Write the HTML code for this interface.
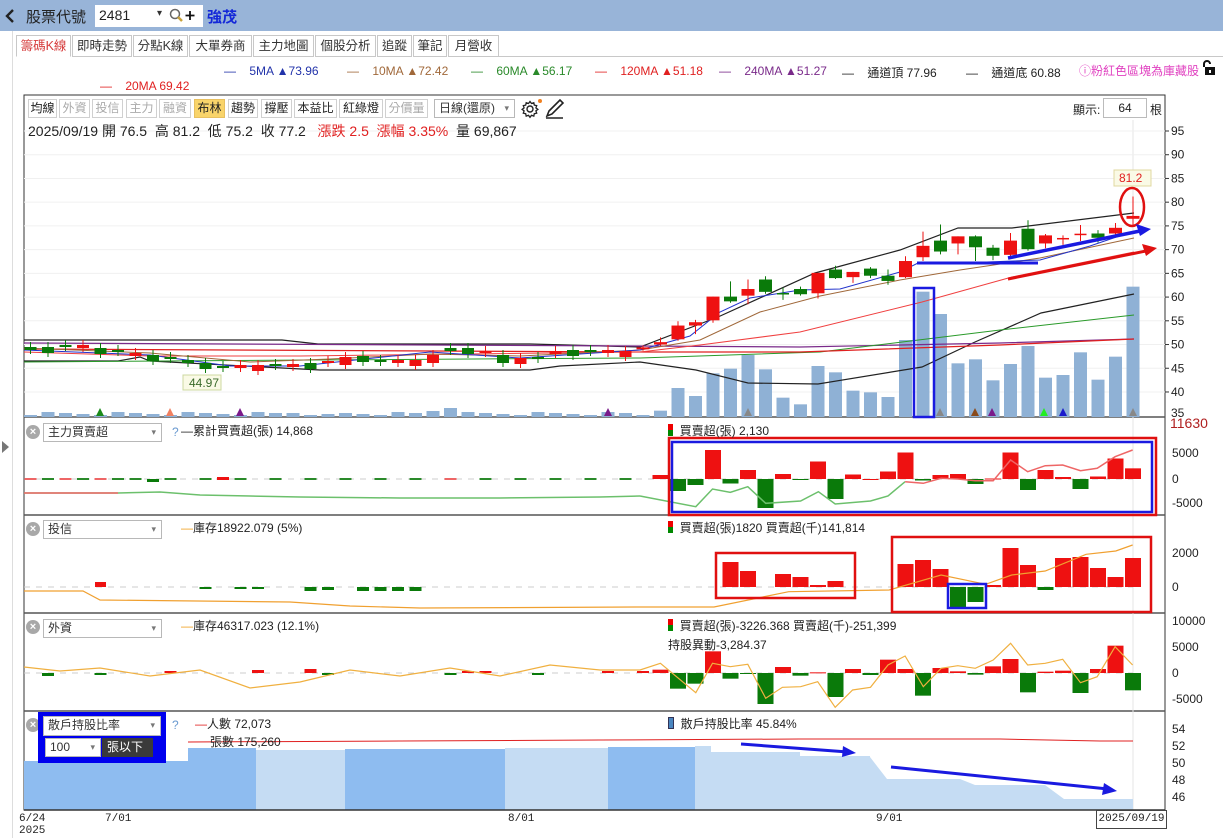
<!DOCTYPE html>
<html><head><meta charset="utf-8">
<style>
*{margin:0;padding:0;box-sizing:border-box}
body{width:1223px;height:838px;overflow:hidden;background:#fff;font-family:"Liberation Sans","Noto Sans CJK TC",sans-serif;font-size:12px;color:#222;position:relative}
.a{position:absolute;white-space:nowrap}
.top{left:0;top:0;width:1223px;height:31px;background:#98b4d8}
.tab{position:absolute;top:35px;height:22px;border:1px solid #c8c8c8;background:#fff;font-size:12.5px;line-height:20px;text-align:center;color:#333}
.btn{position:absolute;top:99px;height:19px;border:1px solid #d0d0d0;background:#fff;font-size:12px;line-height:17px;text-align:center;color:#222}
.dis{color:#aaa}
.sel{position:absolute;height:19px;border:1px solid #b8b8b8;background:#fff;font-size:12px;line-height:17px;padding-left:4px;color:#333}
.sel:after{content:"▾";position:absolute;right:5px;top:0;font-size:9px;color:#777}
.cls{position:absolute;width:14px;height:14px;border-radius:50%;background:#a8a8a8;color:#fff;font-size:11px;line-height:14px;text-align:center;font-weight:bold}
.q{position:absolute;color:#6a9ad0;font-size:12px}
.lg{position:absolute;font-size:12px;white-space:nowrap}
</style></head><body>
<div class="a top"></div>
<svg class="a" style="left:4px;top:8px" width="12" height="16"><path d="M9 2L3 8l6 6" fill="none" stroke="#222" stroke-width="2.4"/></svg>
<div class="a" style="left:26px;top:6px;font-size:15px;color:#222">股票代號</div>
<div class="a" style="left:95px;top:5px;width:108px;height:22px;background:#fff"></div>
<div class="a" style="left:99px;top:7px;font-size:14px;color:#222">2481</div>
<div class="a" style="left:157px;top:8px;font-size:10px;color:#333">▾</div>
<svg class="a" style="left:169px;top:8px" width="30" height="16"><circle cx="6" cy="6" r="4.5" fill="none" stroke="#666" stroke-width="1.5"/><line x1="9" y1="9" x2="13" y2="13" stroke="#c9a23a" stroke-width="2.5"/><path d="M21 3v9M16.5 7.5h9" stroke="#111" stroke-width="1.8"/></svg>
<div class="a" style="left:207px;top:6px;font-size:15px;color:#1428d8;font-weight:bold">強茂</div>
<div class="a" style="left:12px;top:31px;width:1px;height:807px;background:#ddd"></div>
<div class="a" style="left:2px;top:441px;width:0;height:0;border-left:7px solid #777;border-top:6px solid transparent;border-bottom:6px solid transparent"></div>

<div class="tab" style="left:16px;width:55px;color:#d63c3c;border-bottom-color:#fff">籌碼K線</div>
<div class="tab" style="left:72px;width:60px">即時走勢</div>
<div class="tab" style="left:133px;width:55px">分點K線</div>
<div class="tab" style="left:189px;width:63px">大單券商</div>
<div class="tab" style="left:253px;width:61px">主力地圖</div>
<div class="tab" style="left:315px;width:61px">個股分析</div>
<div class="tab" style="left:377px;width:35px">追蹤</div>
<div class="tab" style="left:413px;width:34px">筆記</div>
<div class="tab" style="left:448px;width:51px">月營收</div>
<div class="a" style="left:499px;top:56px;width:724px;height:1px;background:#c8c8c8"></div>

<div class="lg" style="left:224px;top:64px;color:#2233aa">—&nbsp;&nbsp;&nbsp;&nbsp;5MA ▲73.96</div>
<div class="lg" style="left:347px;top:64px;color:#a0683a">—&nbsp;&nbsp;&nbsp;&nbsp;10MA ▲72.42</div>
<div class="lg" style="left:471px;top:64px;color:#2a8a2a">—&nbsp;&nbsp;&nbsp;&nbsp;60MA ▲56.17</div>
<div class="lg" style="left:595px;top:64px;color:#e02020">—&nbsp;&nbsp;&nbsp;&nbsp;120MA ▲51.18</div>
<div class="lg" style="left:719px;top:64px;color:#7a2a8a">—&nbsp;&nbsp;&nbsp;&nbsp;240MA ▲51.27</div>
<div class="lg" style="left:842px;top:64px;color:#222">—&nbsp;&nbsp;&nbsp;&nbsp;通道頂 77.96</div>
<div class="lg" style="left:966px;top:64px;color:#222">—&nbsp;&nbsp;&nbsp;&nbsp;通道底 60.88</div>
<div class="lg" style="left:1079px;top:62px;color:#e040c0">ⓘ粉紅色區塊為庫藏股</div>
<svg class="a" style="left:1200px;top:60px" width="16" height="16"><path d="M4 7V4a3 3 0 0 1 6 0" fill="none" stroke="#111" stroke-width="2"/><rect x="5" y="7" width="10" height="8" fill="#111"/><rect x="9" y="10" width="2" height="3" fill="#fff"/></svg>
<div class="lg" style="left:100px;top:79px;color:#e02020">—&nbsp;&nbsp;&nbsp;&nbsp;20MA 69.42</div>

<svg class="a" id="ch" style="left:0;top:0" width="1223" height="838"></svg>

<div class="btn" style="left:28px;width:29px">均線</div>
<div class="btn dis" style="left:59px;width:31px">外資</div>
<div class="btn dis" style="left:92px;width:31px">投信</div>
<div class="btn dis" style="left:126px;width:31px">主力</div>
<div class="btn dis" style="left:159px;width:32px">融資</div>
<div class="btn" style="left:194px;width:31px;background:#f9d46a;border-color:#e8c060">布林</div>
<div class="btn" style="left:228px;width:30px">趨勢</div>
<div class="btn" style="left:261px;width:31px">撐壓</div>
<div class="btn" style="left:294px;width:43px">本益比</div>
<div class="btn" style="left:339px;width:44px">紅綠燈</div>
<div class="btn dis" style="left:385px;width:43px">分價量</div>
<div class="sel" style="left:434px;top:99px;width:81px">日線(還原)</div>
<svg class="a" style="left:520px;top:98px" width="48" height="22"><circle cx="10" cy="11" r="3" fill="none" stroke="#222" stroke-width="1.4"/><path d="M10 3.5l1.5 2 2.3-.8.5 2.4 2.4.5-.8 2.3 2 1.5-2 1.5.8 2.3-2.4.5-.5 2.4-2.3-.8-1.5 2-1.5-2-2.3.8-.5-2.4-2.4-.5.8-2.3-2-1.5 2-1.5-.8-2.3 2.4-.5.5-2.4 2.3.8z" fill="none" stroke="#222" stroke-width="1.3"/><circle cx="20" cy="3" r="2" fill="#f08020"/><path d="M27 18l2-5 11-11 3 3-11 11z M26 20h17" fill="none" stroke="#222" stroke-width="1.6"/></svg>
<div class="a" style="left:1073px;top:101px;font-size:12px">顯示:</div>
<div class="a" style="left:1103px;top:98px;width:44px;height:20px;border:1px solid #bbb;text-align:center;line-height:18px;font-size:12px">64</div>
<div class="a" style="left:1150px;top:101px;font-size:12px">根</div>
<div class="a" style="left:28px;top:121px;font-size:14px;color:#222">2025/09/19 開 76.5&nbsp; 高 81.2&nbsp; 低 75.2&nbsp; 收 77.2 &nbsp;&nbsp;<span style="color:#e02020">漲跌 2.5&nbsp; 漲幅 3.35%</span>&nbsp; 量 69,867</div>

<div class="cls" style="left:26px;top:425px">×</div><div class="sel" style="left:43px;top:423px;width:119px">主力買賣超</div><div class="q" style="left:172px;top:425px">?</div>
<div class="lg" style="left:181px;top:422px">—累計買賣超(張) 14,868</div>
<div class="cls" style="left:26px;top:522px">×</div><div class="sel" style="left:43px;top:520px;width:119px">投信</div>
<div class="lg" style="left:181px;top:519px"><span style="color:#f0a020">—</span>庫存18922.079 (5%)</div>
<div class="cls" style="left:26px;top:620px">×</div><div class="sel" style="left:43px;top:619px;width:119px">外資</div>
<div class="lg" style="left:181px;top:617px"><span style="color:#f0a020">—</span>庫存46317.023 (12.1%)</div>
<div class="cls" style="left:26px;top:718px">×</div><div class="q" style="left:172px;top:718px">?</div>
<div class="lg" style="left:195px;top:715px"><span style="color:#e02020">—</span>人數 72,073</div>
<div class="lg" style="left:210px;top:733px">張數 175,260</div>
<div class="a" style="left:38px;top:712px;width:128px;height:51px;background:#0000ee"></div>
<div class="sel" style="left:43px;top:716px;width:118px;height:20px">散戶持股比率</div>
<div class="sel" style="left:45px;top:738px;width:56px;height:19px">100</div>
<div class="a" style="left:102px;top:738px;width:51px;height:19px;background:#3a3a3a;color:#fff;font-size:12px;line-height:19px;padding-left:5px">張以下</div>

<div class="lg" style="left:668px;top:422px"><span style="display:inline-block;width:5px;height:12px;background:linear-gradient(#e00 50%,#080 50%);vertical-align:-1px"></span>&nbsp;&nbsp;買賣超(張) 2,130</div>
<div class="lg" style="left:668px;top:519px"><span style="display:inline-block;width:5px;height:12px;background:linear-gradient(#e00 50%,#080 50%);vertical-align:-1px"></span>&nbsp;&nbsp;買賣超(張)1820 買賣超(千)141,814</div>
<div class="lg" style="left:668px;top:617px"><span style="display:inline-block;width:5px;height:12px;background:linear-gradient(#e00 50%,#080 50%);vertical-align:-1px"></span>&nbsp;&nbsp;買賣超(張)-3226.368 買賣超(千)-251,399</div>
<div class="lg" style="left:668px;top:636px">持股異動-3,284.37</div>
<div class="lg" style="left:668px;top:715px"><span style="display:inline-block;width:6px;height:12px;background:#4a86c0;border:1px solid #335;vertical-align:-1px"></span>&nbsp;&nbsp;散戶持股比率 45.84%</div>
<div class="a" style="left:1170px;top:415px;font-size:14px;color:#b02020">11630</div>

<div class="a" style="left:19px;top:813px;font-size:11px;font-family:'Liberation Mono',monospace">6/24<br>2025</div>
<div class="a" style="left:105px;top:813px;font-size:11px;font-family:'Liberation Mono',monospace">7/01</div>
<div class="a" style="left:508px;top:813px;font-size:11px;font-family:'Liberation Mono',monospace">8/01</div>
<div class="a" style="left:876px;top:813px;font-size:11px;font-family:'Liberation Mono',monospace">9/01</div>
<div class="a" style="left:1096px;top:810px;width:71px;height:19px;border:1px solid #444;background:#fff;font-size:11px;line-height:17px;text-align:center;font-family:'Liberation Mono',monospace">2025/09/19</div>

<script>
var S=document.getElementById('ch'),h='';
function X(i){return 1133-(63-i)*17.5}
function Y(p){return 131+(95-p)*4.745}
function r(x,y,w,hh,c,ex){h+='<rect x="'+x+'" y="'+y+'" width="'+w+'" height="'+Math.max(hh,1)+'" fill="'+c+'" '+(ex||'')+'/>'}
function l(x1,y1,x2,y2,c,w,ex){h+='<line x1="'+x1+'" y1="'+y1+'" x2="'+x2+'" y2="'+y2+'" stroke="'+c+'" stroke-width="'+(w||1)+'" '+(ex||'')+'/>'}
function pl(pts,c,w){h+='<polyline points="'+pts.map(function(p){return p[0].toFixed(1)+','+p[1].toFixed(1)}).join(' ')+'" fill="none" stroke="'+c+'" stroke-width="'+(w||1)+'"/>'}
function t(x,y,s,c,fs){h+='<text x="'+x+'" y="'+y+'" fill="'+(c||'#222')+'" font-size="'+(fs||12)+'" font-family="Liberation Sans,sans-serif">'+s+'</text>'}
function zp(a,fy){return a.map(function(p){return[640+p[0]/2.69,fy(p[1])]})}
r(24,95,1141,715,'#fff','stroke="#333" stroke-width="1"');
[417,515,613,711].forEach(function(y){l(24,y,1165,y,'#555',1.5)});
l(1133,120,1133,810,'#e4e4e4',1);
for(var p=95;p>=40;p-=5){var y=Y(p);l(24,y,1165,y,'#f0f0f0',1);l(1165,y,1169,y,'#333',1);t(1171,y+4,p,'#222',12)}
t(1171,417,'35','#222',12);
var vol=[];for(var i=0;i<35;i++)vol.push(2+((i*7)%4));
vol[17]=3;vol[22]=4;vol[23]=6;vol[24]=9;vol[25]=5;vol[14]=4;vol[15]=4;
var vz=[null,752,684,708,640,626,585,628,713,733,618,637,692,697,711,540,395,462,610,598,661,612,558,653,645,577,659,590,380];
for(var i=35;i<64;i++){vol[i]=vz[i-35]?417-(160+vz[i-35]/3):2}
for(var i=0;i<64;i++)r(X(i)-6.5,417-vol[i],13,vol[i],'#8fb1d5');
[[100,'#1a8a1a'],[170,'#f08060'],[240,'#7a1a8a'],[608,'#7a1a8a'],[748,'#888'],[940,'#888'],[975,'#8a4a1a'],[992,'#7a1a8a'],[1044,'#22ee22'],[1063,'#1a1acc'],[1133,'#888']].forEach(function(a){h+='<polygon points="'+(a[0]-4)+',416 '+(a[0]+4)+',416 '+a[0]+',408" fill="'+a[1]+'"/>'});
pl([[24,340],[282,340],[318,344],[530,344],[640,347],[718,317],[815,273],[900,250],[958,228],[1012,228],[1134,213]],'#222',1.2);
pl([[24,361],[118,361],[140,357],[150,361],[320,370],[530,370],[560,366],[640,362],[696,370],[748,383],[818,384],[922,367],[975,342],[1041,313],[1134,294]],'#222',1.2);
pl([[24,343],[640,346],[800,347],[1000,343],[1134,339]],'#7a2a8a',1.2);
pl([[24,362],[310,360],[640,358],[820,352],[1000,330],[1134,315]],'#2a9a2a',1);
pl([[24,349],[640,352],[800,352],[1000,345],[1134,339]],'#e02020',1.2);
pl([[24,352],[150,356],[300,356],[640,352],[700,345],[800,332],[922,302],[1012,277],[1134,252]],'#f04040',1);
pl([[24,348],[150,353],[250,362],[330,359],[430,354],[520,356],[640,350],[700,340],[760,312],[820,296],[900,280],[960,270],[1040,258],[1134,238]],'#a0683a',1);
pl([[24,350],[150,355],[230,366],[300,366],[430,352],[520,358],[640,350],[690,336],[720,312],[750,298],[800,290],[840,289],[900,272],[920,262],[960,263],[1040,260],[1090,246],[1134,231]],'#2233cc',1);
var ey=[347,347,345,345,348,350,353,355,357,360,363,366,365,365,364,364,363,361,357,356,360,360,360,355,348,348,351,355,358,357,351,350,350,350,351];
var ec='gggrggrgggggrrgrgrrggrrrggrgrgrggrr';
for(var i=0;i<35;i++){var x=X(i),y=ey[i],c=ec[i]=='r'?'#ee1111':'#0a7a0a',bh=(i%3==0)?3:(i%3==1?6:2);if(i==18||i==23||i==27)bh=8;l(x,y-5,x,y+bh+4,c,1);r(x-6,y,12,bh,c)}
var lc=[[49,49.4,49.8,48.7],[50,50.5,51.5,49.8],[51.1,54.0,54.9,50.8],[54.0,54.7,55.2,52.2],[55.1,60.1,60.1,54.6],[60.1,59.1,63.3,58.8],[60.3,61.7,63.7,58.5],[63.7,61.1,64.4,60.7],[60.7,60.6,62,59.4],[61.7,60.6,62.2,60.3],[60.8,65.1,65.1,59.7],[65.8,64.0,66.6,63.8],[64.2,65.3,65.3,63.0],[66.0,64.5,66.3,64.0],[64.5,63.4,65.8,62.6],[64.2,67.6,68.6,64.0],[68.4,70.8,73.8,67.6],[71.9,69.6,75.3,69.0],[71.3,72.8,72.8,69.0],[72.8,70.5,73,67.6],[70.4,68.7,71,67.8],[68.9,71.9,73.5,68.4],[74.4,70.1,76.2,69.8],[71.3,73.0,73.3,70.3],[72.3,72.3,73.0,71.0],[73.2,73.2,75.2,71.8],[73.4,72.5,74.1,71.5],[73.4,74.6,75.6,73.0],[76.5,77.1,81.2,75.2]];
for(var k=0;k<lc.length;k++){var i=35+k,d=lc[k],x=X(i),up=d[1]>=d[0],c=up?'#ee1111':'#0a7a0a',t1=Y(Math.max(d[0],d[1])),b1=Y(Math.min(d[0],d[1]));l(x,Y(d[2]),x,Y(d[3]),c,1);if(b1-t1<1.5){l(x-6,t1,x+6,t1,c,1.5)}else r(x-6.5,t1,13,b1-t1,c)}
r(183,375,38,15,'#fafae6','stroke="#cdd8a0"');t(189,387,'44.97','#3a6a2a',12);
r(1114,170,37,16,'#fafae6','stroke="#e0d8a0"');t(1119,182,'81.2','#e02020',12);
h+='<ellipse cx="1132" cy="207" rx="12" ry="19" fill="none" stroke="#e01010" stroke-width="2.5"/>';
l(917,263,1038,263,'#1a1ae0',3);
l(1008,258,1140,231,'#1a1ae0',3.5);h+='<polygon points="1151,229 1136,224 1140,236" fill="#1a1ae0"/>';
l(1008,279,1146,251,'#e01010',3);h+='<polygon points="1157,248 1142,244 1146,256" fill="#e01010"/>';
r(914,288,20,129,'none','stroke="#1a1ae0" stroke-width="2.5"');
l(24,479,1133,479,'#ccc',1,'stroke-dasharray="6,6"');
[[5000,453],[0,479],[-5000,503]].forEach(function(a){t(1172,a[1]+4,a[0],'#222',12)});
var p1=[800,-2400,-1200,5800,-900,1800,-5800,1000,-100,3500,-4000,900,0,1500,5300,-300,800,1000,-1000,100,5300,-2200,1800,400,-2000,500,4100,2130];
for(var k=0;k<p1.length;k++){var v=p1[k],x=X(36+k),hh=Math.abs(v)/200;r(x-8,v>=0?479-hh:479,16,hh,v>=0?'#ee1111':'#0a7a0a')}
for(var i=0;i<35;i++){var c=[0,2,4,24,25,27,29].indexOf(i)>=0?'#ee6666':'#2a8a2a';if(i%2==0||i<6)r(X(i)-6,478,12,2,c)}
r(X(11)-6,477,12,3,'#ee1111');r(X(7)-6,479,12,3,'#0a7a0a');
pl([[24,493],[118,493],[160,492],[200,495],[250,496],[300,497],[400,498],[500,498],[600,497],[640,496]],'#6cc06c',1.5);
pl([[24,493],[118,493]],'#ee6666',1.5);
var c1=zp([[0,243],[150,275],[195,222],[243,232],[290,215],[338,265],[432,258],[480,230],[525,267],[620,258],[667,243],[713,200]],function(y){return 415+y/3});
pl(c1,'#6cc06c',1.5);
pl(zp([[713,200],[762,205],[810,190],[855,192],[902,197],[950,197],[997,135],[1043,170],[1090,152],[1137,150],[1185,167],[1230,160],[1278,125],[1325,105]],function(y){return 415+y/3}),'#ee6666',1.5);
r(669,438,487,77,'none','stroke="#e01010" stroke-width="2.5"');
r(672,442,480,70,'none','stroke="#1a1ae0" stroke-width="2.5"');
l(24,587,1133,587,'#ccc',1,'stroke-dasharray="6,6"');
t(1172,557,'2000','#222',12);t(1172,591,'0','#222',12);
r(95,582,11,5,'#ee1111');
[[X(16),3],[X(17),2],[X(19),3],[X(20),3],[X(21),3],[X(22),3],[X(10),1],[X(12),1],[X(13),1]].forEach(function(a){r(a[0]-6,587,12,a[1]+1,'#0a7a0a')});
var p2={40:25,41:16,43:13,44:10,45:2,46:6,50:23,51:27,52:18,53:-20,54:-15,55:2,56:39,57:22,58:-3,59:29,60:30,61:19,62:10,63:29};
for(var k in p2){var v=p2[k],x=X(+k);r(x-8,v>=0?587-v:587,16,Math.abs(v),v>=0?'#ee1111':'#0a7a0a')}
pl([[24,591],[83,591],[100,600],[290,602],[350,606],[420,608],[640,607],[714,607]].concat(zp([[400,530],[670,525],[810,480],[930,508],[1000,480],[1090,468],[1200,418],[1280,408],[1325,390]],function(y){return 415+y/3})),'#f0a030',1.2);
r(716,553,139,45,'none','stroke="#e01010" stroke-width="2.5"');
r(892,537,259,75,'none','stroke="#e01010" stroke-width="2.5"');
r(948,584,38,24,'none','stroke="#1a1ae0" stroke-width="2.5"');
l(24,673,1133,673,'#ccc',1,'stroke-dasharray="6,6"');
[[10000,621],[5000,647],[0,673],[-5000,699]].forEach(function(a){t(1172,a[1]+4,a[0],'#222',12)});
var p3=[10,-47,-32,65,-17,-3,-93,18,-8,2,-72,12,-6,40,12,-68,15,5,-5,20,42,-58,4,7,-60,12,82,-52];
for(var k=0;k<p3.length;k++){var v=p3[k]/3,x=X(36+k);r(x-8,v>=0?673-v:673,16,Math.abs(v),v>=0?'#ee1111':'#0a7a0a')}
[[X(1),-3],[X(4),-2],[X(8),2],[X(13),3],[X(16),4],[X(17),-2],[X(24),-2],[X(25),2],[X(26),2],[X(29),-2],[X(33),2],[X(35),2]].forEach(function(a){var v=a[1];r(a[0]-6,v>=0?673-v:673,12,Math.abs(v),v>=0?'#ee1111':'#0a7a0a')});
pl([[24,667],[60,671],[100,668],[150,676],[200,670],[250,688],[300,682],[350,670],[400,676],[450,668],[500,676],[550,665],[600,670],[640,670]].concat(zp([[55,160],[150,248],[195,160],[243,170],[290,163],[338,265],[383,232],[432,230],[478,215],[525,292],[572,240],[620,232],[667,165],[713,138],[762,230],[810,175],[855,167],[902,175],[950,150],[997,100],[1043,165],[1090,160],[1137,148],[1185,218],[1230,200],[1278,110],[1325,165]],function(y){return 610+y/3})),'#f0b040',1.2);
[[54,729],[52,746],[50,763],[48,780],[46,797]].forEach(function(a){t(1172,a[1]+4,a[0],'#222',12)});
r(24,761,164,49,'#8ebcf0');r(188,748,68,62,'#8ebcf0');r(256,750,89,60,'#c5dcf3');r(345,749,160,61,'#8ebcf0');r(505,748,103,62,'#c5dcf3');r(608,747,87,63,'#8ebcf0');
h+='<polygon points="695,746 711,746 711,752 800,752 800,756 870,756 870,757 887,779 960,779 975,785 1045,785 1064,799 1133,799 1133,810 695,810" fill="#c5dcf3"/>';
pl([[188,742],[400,741],[600,740],[800,739],[1000,739],[1100,741],[1133,741]],'#e02020',1);
l(741,744,848,752,'#1a1ae0',3);h+='<polygon points="856,753 843,746 842,757" fill="#1a1ae0"/>';
l(891,767,1108,789,'#1a1ae0',3);h+='<polygon points="1117,791 1104,783 1102,795" fill="#1a1ae0"/>';
l(24,810,1165,810,'#333',1.5);
S.innerHTML=h;
</script>
</body></html>
